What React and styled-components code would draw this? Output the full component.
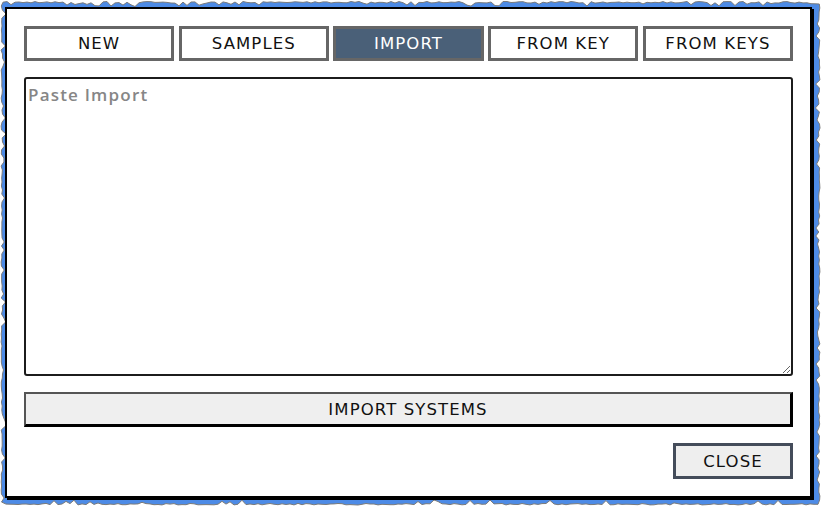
import React, { useMemo } from 'react'
import styled, { createGlobalStyle } from 'styled-components'

const GlobalStyle = createGlobalStyle`
  html, body {
    margin: 0;
    padding: 0;
    background: #ffffff;
  }
  body {
    font-family: 'DejaVu Sans', 'Open Sans', sans-serif;
  }
  * {
    box-sizing: border-box;
  }
`

const Page = styled.div`
  position: relative;
  width: 822px;
  height: 507px;
  padding: 7px 0 0 5px;
`

const TornEdge = styled.svg`
  position: absolute;
  left: 0;
  top: 0;
  width: 822px;
  height: 507px;
`

const Dialog = styled.div`
  position: relative;
  width: 807px;
  height: 491px;
  background: #ffffff;
  border: 2px solid #000000;
  box-shadow: 2px 2px 0 #000000;
  padding: 17px;
  display: flex;
  flex-direction: column;
  gap: 16px;
`

const Tabs = styled.div`
  display: grid;
  grid-template-columns: repeat(5, 1fr);
  gap: 4.5px;
`

const Tab = styled.button`
  height: 35px;
  border: 3px solid #666666;
  background: ${p => (p.$active ? '#4a6078' : '#ffffff')};
  color: ${p => (p.$active ? '#ffffff' : '#111111')};
  font-family: inherit;
  font-size: 16.5px;
  letter-spacing: 1.1px;
  padding: 0;
  cursor: pointer;
`

const ImportBox = styled.textarea`
  height: 299px;
  width: 100%;
  border: 2px solid #1c1c1c;
  border-radius: 3px;
  padding: 4px 2px;
  font-family: 'Open Sans', 'DejaVu Sans', sans-serif;
  font-size: 17px;
  font-weight: 600;
  letter-spacing: 1.2px;
  color: #222222;
  outline: none;
  resize: both;
  &::placeholder {
    color: #868686;
  }
`

const WideButton = styled.button`
  height: 35px;
  width: 100%;
  background: #efefef;
  border-style: solid;
  border-width: 2px 3px 3px 2px;
  border-color: #555555 #000000 #000000 #555555;
  font-family: inherit;
  font-size: 16.5px;
  letter-spacing: 1.1px;
  color: #111111;
  padding: 0;
`

const Footer = styled.div`
  display: flex;
  justify-content: flex-end;
`

const CloseButton = styled.button`
  width: 120px;
  height: 36px;
  background: #eeeeee;
  border: 3px solid #444c5a;
  font-family: inherit;
  font-size: 16.5px;
  letter-spacing: 1.1px;
  color: #111111;
  padding: 0;
`

// seeded noise for the torn paper edge
function makeEdge() {
  let s = 11
  const rnd = () => {
    s = (s * 16807) % 2147483647
    return s / 2147483647
  }
  const jag = () => {
    const r = rnd()
    return r > 0.85 ? 2 + rnd() * 3 : rnd() * 1.6
  }
  const pts = []
  for (let x = 3; x <= 818; x += 4) pts.push([x, 1.5 + jag()])
  for (let y = 4; y <= 502; y += 4) pts.push([820 - jag(), y])
  for (let x = 818; x >= 3; x -= 4) pts.push([x, 505 - jag()])
  for (let y = 502; y >= 4; y -= 4) pts.push([1 + jag(), y])
  return 'M' + pts.map(p => p[0].toFixed(1) + ' ' + p[1].toFixed(1)).join(' L') + ' Z'
}

const tabs = ['NEW', 'SAMPLES', 'IMPORT', 'FROM KEY', 'FROM KEYS']

function App() {
  const edge = useMemo(makeEdge, [])

  return (
    <Page>
      <GlobalStyle />
      <TornEdge viewBox="0 0 822 507">
        <path d={edge} fill="#4d8be6" stroke="#7a7a7a" strokeWidth="1" />
      </TornEdge>
      <Dialog>
        <Tabs>
          {tabs.map(t => (
            <Tab key={t} $active={t === 'IMPORT'}>
              {t}
            </Tab>
          ))}
        </Tabs>
        <ImportBox placeholder="Paste Import" autoFocus />
        <WideButton>IMPORT SYSTEMS</WideButton>
        <Footer>
          <CloseButton>CLOSE</CloseButton>
        </Footer>
      </Dialog>
    </Page>
  )
}

export default App
